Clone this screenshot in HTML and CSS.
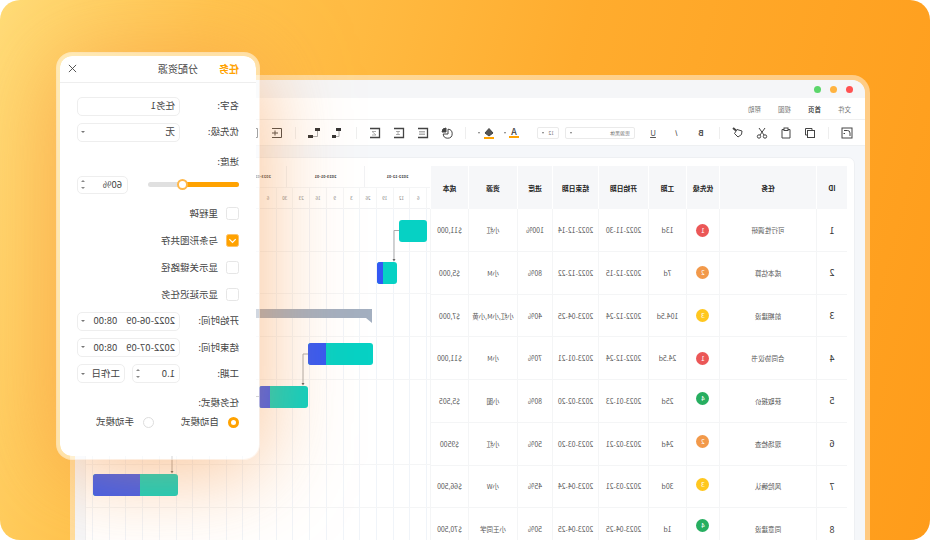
FILE: index.html
```html
<!DOCTYPE html>
<html lang="zh">
  <head>
    <meta charset="UTF-8" />
    <title>甘特图任务</title>
    <link rel="stylesheet" href="styles.css">
  </head>
  <body>
    <div class="stage">
      <div class="window">
        <div class="titlebar">
          <span class="dot red"></span>
          <span class="dot yellow"></span>
          <span class="dot green"></span>
        </div>
        <div class="menu">
          <span>文件</span>
          <span class="active">首页</span>
          <span>视图</span>
          <span>帮助</span>
        </div>
        <div class="toolbar">
          <svg class="ico" viewBox="0 0 12 12"><rect x="1" y="1" width="10" height="10"/><path d="M3 9V6a2.500 2.500 0 0 1 2.500-2.500H9M8 6.500h1.500"/></svg>
          <span class="sep"></span>
          <svg class="ico" viewBox="0 0 12 12"><path d="M4 3V1.500h6.500V8H9"/><rect x="1.500" y="3.500" width="7" height="7"/></svg>
          <svg class="ico" viewBox="0 0 12 12"><path d="M4 2.500H2v8.500h8V2.500H8"/><rect x="4" y="1" width="4" height="2.500"/></svg>
          <svg class="ico" viewBox="0 0 12 12"><circle cx="3" cy="9.500" r="1.700"/><circle cx="9" cy="9.500" r="1.700"/><path d="M4 8 9 1M8 8 3 1"/></svg>
          <svg class="ico" viewBox="0 0 12 12"><path d="M2 4 7 2.500l2.500 4L6 10 2.500 7.500z"/><path d="M8 3.500l3-2.500" stroke-width="2"/></svg>
          <span class="sep"></span>
          <span class="tb-letter bold">B</span>
          <span class="tb-letter italic">I</span>
          <span class="tb-letter under">U</span>
          <div class="tb-selects">
            <div class="tb-select font-select"><span>思源黑体</span><i class="caret small"></i></div>
            <div class="tb-select size-select"><span>12</span><i class="caret small"></i></div>
          </div>
          <div class="tb-color first">
            <span class="letter-a">A</span>
            <i class="caret small"></i>
          </div>
          <div class="tb-color">
            <svg class="ico" viewBox="0 0 12 12"><path class="bucket" d="M6 1.500 10 6l-4 3-4-3z"/><path class="fill-bar" d="M1 11h10"/></svg>
            <i class="caret small"></i>
          </div>
          <span class="sep"></span>
          <svg class="ico" viewBox="0 0 12 12"><path d="M5 2.200A4.500 4.500 0 1 0 9.800 7H5z"/><path d="M7 1a4 4 0 0 1 4 4H7z" fill="#444"/></svg>
          <svg class="ico" viewBox="0 0 12 12"><path d="M11 1.500H1.500v9H11" stroke-width="1.300"/><path class="soft" d="M4 4.500h6M4 6h6M4 7.500h6"/></svg>
          <svg class="ico" viewBox="0 0 12 12"><path d="M11 1.500H1.500v9H11" stroke-width="1.300"/><path class="soft" d="M5 4.500h4M5 7.500h4M7 4v4"/></svg>
          <svg class="ico" viewBox="0 0 12 12"><path d="M11 1.500H1.500v9H11" stroke-width="1.300"/><path class="soft" d="M5 4.500h4L5 8h4"/></svg>
          <span class="sep"></span>
          <svg class="ico" viewBox="0 0 12 12"><rect class="solid" x="3" y="1" width="5" height="3"/><rect class="solid" x="8" y="8" width="4" height="3"/><path class="soft" d="M5 4v5.500h3"/></svg>
          <svg class="ico" viewBox="0 0 12 12"><rect class="solid" x="0" y="1" width="5" height="3"/><rect class="solid" x="7" y="8" width="5" height="3"/><path class="soft" d="M2.500 4v5.500H7"/></svg>
          <span class="sep"></span>
          <svg class="ico" viewBox="0 0 12 12"><path d="M11 1.500H1.500v9H11"/><path d="M5 6h6M8 3.500v5" /></svg>
          <svg class="ico" viewBox="0 0 12 12"><path d="M11 1.500H1.500v9H11"/></svg>
        </div>

        <div class="content">
          <div class="card">
            <div class="table">
              <div class="row head">
                <div>ID</div><div>任务</div><div>优先级</div><div>工期</div><div>开始日期</div><div>结束日期</div><div>进度</div><div>资源</div><div>成本</div>
              </div>
              <div class="row">
                <div class="id">1</div><div>可行性调研</div><div><span class="pri p1">1</span></div><div>13d</div><div>2022-11-30</div><div>2022-12-14</div><div>100%</div><div>小红</div><div>$11,000</div>
              </div>
              <div class="row">
                <div class="id">2</div><div>成本估算</div><div><span class="pri p2">2</span></div><div>7d</div><div>2022-12-15</div><div>2022-12-22</div><div>80%</div><div>小M</div><div>$5,000</div>
              </div>
              <div class="row">
                <div class="id">3</div><div>前期建设</div><div><span class="pri p3">3</span></div><div>104.5d</div><div>2022-12-24</div><div>2023-04-25</div><div>40%</div><div class="tight">小红,小M,小黄</div><div>$7,000</div>
              </div>
              <div class="row">
                <div class="id">4</div><div>合同协议书</div><div><span class="pri p1">1</span></div><div>24.5d</div><div>2022-12-24</div><div>2023-01-21</div><div>70%</div><div>小M</div><div>$11,000</div>
              </div>
              <div class="row">
                <div class="id">5</div><div>获取报价</div><div><span class="pri p4 up">4</span></div><div>25d</div><div>2023-01-23</div><div>2023-02-20</div><div>80%</div><div>小图</div><div>$5,505</div>
              </div>
              <div class="row">
                <div class="id">6</div><div>现场检查</div><div><span class="pri p2 up">2</span></div><div>24d</div><div>2023-02-21</div><div>2023-03-20</div><div>50%</div><div>小红</div><div>$9500</div>
              </div>
              <div class="row">
                <div class="id">7</div><div>风险确认</div><div><span class="pri p3 up">3</span></div><div>30d</div><div>2022-03-21</div><div>2023-04-24</div><div>45%</div><div>小W</div><div>$66,500</div>
              </div>
              <div class="row">
                <div class="id">8</div><div>同意建设</div><div><span class="pri p4 up2">4</span></div><div>1d</div><div>2023-04-25</div><div>2023-04-25</div><div>50%</div><div>小王同学</div><div>$70,500</div>
              </div>
            </div>

            <div class="gantt">
              <div class="gantt-head">
                <div class="months">
                  <span class="m1">2022-12-01</span>
                  <span class="m2">2023-01-01</span>
                  <span class="m3">2023-02-01</span>
                </div>
                <div class="days">
                  <span>6</span><span>12</span><span>19</span><span>26</span><span>3</span><span>9</span><span>16</span><span>23</span><span>30</span><span>6</span><span>13</span><span>20</span>
                </div>
              </div>
              <div class="gantt-body">
                <svg class="links" viewBox="0 0 345 335">
                  <path d="M31 21.500H36V50M122 145H127V174M171 187.500H258V262"/>
                  <path class="head" d="M34.500 50h3L36 52.500zM125.500 174h3l-1.500 2.500zM256.500 262h3l-1.500 2.500z"/>
                </svg>
                <div class="bar" style="left:3px;top:10.500px;width:28px"></div>
                <div class="bar" style="left:33px;top:52.500px;width:20px"><i style="width:6px"></i></div>
                <div class="summary" style="left:58px;top:99.500px;width:120px"></div>
                <div class="bar" style="left:57px;top:133.500px;width:65px"><i style="width:18px"></i></div>
                <div class="bar" style="left:122px;top:176.500px;width:49px"><i style="width:11px"></i></div>
                <div class="bar" style="left:252px;top:264.500px;width:85px"><i style="width:47px"></i></div>
              </div>
            </div>
          </div>
        </div>
      </div>

      <div class="panel">
        <div class="tabs">
          <span class="tab on">任务</span>
          <span class="tab">分配资源</span>
          <svg class="close" viewBox="0 0 10 10"><path d="M1 1l8 8M9 1l-8 8"/></svg>
        </div>
        <div class="panel-body">
          <div class="form-row">
            <label>名字:</label>
            <div class="field"><span>任务1</span></div>
          </div>
          <div class="form-row gap">
            <label>优先级:</label>
            <div class="field"><span>无</span><i class="caret"></i></div>
          </div>
          <div class="plain-label progress-label">进度:</div>
          <div class="slider-row">
            <div class="slider">
              <div class="slider-fill" style="width:62.600%"></div>
              <span class="thumb" style="left:62.600%"></span>
            </div>
            <div class="field short"><span>60%</span><i class="spin"></i></div>
          </div>

          <div class="checks">
            <div class="check-row"><span class="box"></span>里程碑</div>
            <div class="check-row">
              <span class="box on"><svg viewBox="0 0 12 12"><path d="M2.500 4.500 6 8l3.500-3.500"/></svg></span>与条形图共存
            </div>
            <div class="check-row"><span class="box"></span>显示关键路径</div>
            <div class="check-row"><span class="box"></span>显示延迟任务</div>
          </div>

          <div class="form-row times">
            <label>开始时间:</label>
            <div class="field"><span class="when">2022-06-09<b>08:00</b></span><i class="caret"></i></div>
          </div>
          <div class="form-row gap-time">
            <label>结束时间:</label>
            <div class="field"><span class="when">2022-07-09<b>08:00</b></span><i class="caret"></i></div>
          </div>
          <div class="form-row gap-time">
            <label>工期:</label>
            <div class="split">
              <div class="field duration"><span>1.0</span><i class="spin"></i></div>
              <div class="field unit"><span>工作日</span><i class="caret"></i></div>
            </div>
          </div>

          <div class="plain-label mode-label">任务模式:</div>
          <div class="radios">
            <span class="radio on"></span><span class="radio-text">自动模式</span>
            <span class="radio"></span><span>手动模式</span>
          </div>
        </div>
      </div>
    </div>
  </body>
</html>
```

FILE: styles.css
```css
* {
  box-sizing: border-box;
}
body {
  margin: 0;
  background: #fff;
  font-family: "Noto Sans CJK SC", sans-serif;
  color: #333;
}
.stage {
  position: relative;
  width: 930px;
  height: 540px;
  padding: 75px 0 0 60px;
  overflow: hidden;
  border-radius: 20px;
  background: linear-gradient(255deg, #ffdc78 0%, #ffc44f 20%, #ffac2e 55%, #ff9c1a 100%);
  /* the whole shot is flipped left to right */
  transform: scaleX(-1);
}

.window {
  width: 800px;
  height: 500px;
  border: 5px solid rgba(255, 255, 255, 0.45);
  border-radius: 18px;
  background: #f5f7fa;
  background-clip: padding-box;
  overflow: hidden;
}
.titlebar {
  display: flex;
  align-items: center;
  gap: 9px;
  height: 18px;
  padding-left: 12px;
  background: #f5f6f8;
}
.dot {
  width: 7px;
  height: 7px;
  border-radius: 50%;
}
.red { background: #ff5252; }
.yellow { background: #ffb340; }
.green { background: #5cd66b; }

.menu {
  display: flex;
  align-items: center;
  gap: 17px;
  height: 22px;
  padding-left: 14px;
  background: #fff;
  border-bottom: 1px solid #f0f0f0;
  font-size: 6.500px;
  color: #777;
}
.menu .active {
  color: #222;
  font-weight: 500;
}
.toolbar {
  display: flex;
  align-items: center;
  gap: 12px;
  height: 26px;
  padding-left: 12px;
  background: #fff;
  border-bottom: 1px solid #eef0f2;
}
.ico {
  flex: none;
  width: 12px;
  height: 12px;
  fill: none;
  stroke: #444;
  stroke-width: 1;
}
.ico .soft {
  stroke: #999;
  stroke-width: 0.800;
}
.ico .solid {
  fill: #333;
  stroke: none;
}
.ico .bucket {
  fill: #555;
}
.ico .fill-bar {
  stroke: #ffa200;
  stroke-width: 2;
}
.sep {
  flex: none;
  width: 1px;
  height: 12px;
  background: #eee;
}
.tb-letter {
  flex: none;
  width: 12px;
  font-size: 8px;
  line-height: 12px;
  text-align: center;
  color: #555;
}
.bold { font-weight: 700; }
.italic { font-style: italic; }
.under { text-decoration: underline; }
.tb-selects {
  display: flex;
  gap: 6px;
}
.tb-select {
  display: flex;
  align-items: center;
  justify-content: space-between;
  height: 12px;
  padding: 0 4px;
  border: 1px solid #eaeaea;
  border-radius: 2px;
  font-size: 5px;
  color: #777;
}
.font-select { width: 70px; }
.size-select { width: 22px; }
.tb-color {
  display: flex;
  align-items: center;
  gap: 3px;
  margin-left: -3px;
}
.tb-color.first { margin-left: 6px; }
.letter-a {
  width: 10px;
  font-size: 9px;
  font-weight: 500;
  line-height: 9px;
  text-align: center;
  color: #444;
  border-bottom: 2px solid #ffa200;
}

.caret {
  flex: none;
  width: 0;
  height: 0;
  border-left: 2px solid transparent;
  border-right: 2px solid transparent;
  border-top: 2.500px solid #777;
}
.caret.small {
  border-left-width: 1.500px;
  border-right-width: 1.500px;
  border-top-width: 2px;
}

.content {
  padding: 10.700px 10px 0;
}
.card {
  display: flex;
  height: 400px;
  padding: 8px 0 0 7px;
  background: #fff;
  border: 1px solid #eef0f3;
  border-radius: 7px;
}
.table {
  flex: none;
  width: 417px;
}
.row {
  display: grid;
  grid-template-columns: 31px 97px 33px 38px 50px 46px 35px 49px 38px;
  height: 42.700px;
  border-bottom: 1px solid #f4f5f6;
  font-size: 6.600px;
  color: #555;
}
.row > div {
  display: flex;
  align-items: center;
  justify-content: center;
  border-right: 1px solid #f4f5f6;
  white-space: nowrap;
}
.row > div:nth-child(n+4) {
  font-size: 6.900px;
}
.row > div:nth-child(8) {
  font-size: 6.500px;
}
.row .id {
  font-size: 9px;
  color: #333;
}
.row > .tight {
  font-size: 6px;
}
.row.head {
  height: 43.700px;
  background: #f6f7f9;
  border-bottom: 0;
  font-weight: 700;
  color: #222;
}
.row.head > div {
  font-size: 6.800px;
  border-right-color: #fff;
}
.pri {
  width: 13px;
  height: 13px;
  border-radius: 50%;
  font-size: 6.500px;
  line-height: 13px;
  text-align: center;
  color: #fff;
}
.p1 { background: #eb5757; }
.p2 { background: #f2994a; }
.p3 { background: #ffc71f; }
.p4 { background: #27ae60; }
.up { margin-bottom: 4px; }
.up2 { margin-bottom: 8px; }

.gantt {
  flex: 1;
  min-width: 0;
}
.gantt-head {
  height: 43.700px;
  background: #fff;
  border-bottom: 1px solid #f1f2f4;
}
.months {
  display: flex;
  height: 22px;
  border-bottom: 1px solid #f4f5f6;
  font-size: 4px;
  font-weight: 700;
  line-height: 21px;
  text-align: center;
  color: #444;
}
.m1 { width: 66px; border-right: 1px solid #f1f2f4; }
.m2 { width: 78px; border-right: 1px solid #f1f2f4; }
.m3 { width: 52px; }
.days {
  display: flex;
  padding-left: 3px;
  font-size: 4.500px;
  line-height: 21px;
  text-align: center;
  color: #777;
}
.days span {
  width: 16.700px;
  border-left: 1px solid #f4f5f6;
}
.gantt-body {
  position: relative;
  height: 335px;
  background-image:
    repeating-linear-gradient(to bottom, transparent 0 41.700px, #f4f5f6 41.700px 42.700px),
    repeating-linear-gradient(to right, #f0f4f9 0 1px, transparent 1px 16.700px);
  background-position: 0 0, 3px 0;
}
.links {
  position: absolute;
  top: 0;
  left: 0;
  width: 345px;
  height: 335px;
  fill: none;
  stroke: #aaa;
  stroke-width: 1;
}
.links .head {
  fill: #666;
  stroke: none;
}
.bar {
  position: absolute;
  display: flex;
  justify-content: flex-end;
  height: 22px;
  overflow: hidden;
  border-radius: 3px;
  background: #06d1c4;
}
.bar i {
  height: 100%;
  background: #3358f4;
}
.summary {
  position: absolute;
  height: 9px;
  background: #a3afc0;
}
.summary::after {
  content: "";
  position: absolute;
  left: 0;
  top: 9px;
  border-top: 5px solid #a3afc0;
  border-right: 6px solid transparent;
}

/* task panel */
.panel {
  position: absolute;
  top: 52px;
  left: 670px;
  width: 204px;
  height: 408px;
  border: 4px solid rgba(255, 255, 255, 0.5);
  border-radius: 16px;
  background: #fff;
  background-clip: padding-box;
  box-shadow: 0 10px 90px rgba(245, 150, 70, 0.6);
  font-size: 9.500px;
  color: #444;
}
.tabs {
  display: flex;
  align-items: center;
  height: 26.500px;
  padding: 0 8px 0 17px;
  border-bottom: 1px solid #eee;
  font-size: 10px;
  line-height: 1;
}
.tab.on {
  color: #ffa200;
  font-weight: 700;
  margin-right: 21px;
}
.close {
  width: 9px;
  height: 9px;
  margin-left: auto;
  fill: none;
  stroke: #444;
  stroke-width: 1;
}
.panel-body {
  padding: 14px 17px 0;
  line-height: 1;
}
.form-row {
  display: flex;
  align-items: center;
}
.form-row label {
  flex: none;
  width: 59px;
}
.form-row.gap { margin-top: 7px; }
.form-row.times { margin-top: 10.500px; }
.form-row.gap-time { margin-top: 7.300px; }
.field {
  display: flex;
  align-items: center;
  justify-content: space-between;
  flex: none;
  width: 103px;
  height: 19px;
  padding: 0 3px 0 4px;
  border: 1px solid #eee;
  border-radius: 5px;
}
.field.short {
  width: 51px;
  height: 18px;
  padding-left: 5px;
}
.when b {
  margin-left: 9px;
  font-weight: 400;
}
.split {
  display: flex;
  gap: 7px;
}
.field.duration { width: 48px; }
.field.unit { width: 48px; }
.spin {
  position: relative;
  flex: none;
  width: 4px;
  height: 9px;
}
.spin::before,
.spin::after {
  content: "";
  position: absolute;
  left: 0;
  border-left: 2px solid transparent;
  border-right: 2px solid transparent;
}
.spin::before {
  top: 0;
  border-bottom: 2.500px solid #888;
}
.spin::after {
  bottom: 0;
  border-top: 2.500px solid #888;
}
.plain-label {
  height: 10px;
}
.progress-label { margin-top: 15px; }
.mode-label { margin-top: 15px; }
.slider-row {
  display: flex;
  align-items: center;
  justify-content: space-between;
  margin-top: 9px;
}
.slider {
  position: relative;
  width: 91px;
  height: 5px;
  border-radius: 3px;
  background: #e0e0e0;
}
.slider-fill {
  height: 100%;
  border-radius: 3px;
  background: #ffa200;
}
.thumb {
  position: absolute;
  top: -3px;
  width: 11px;
  height: 11px;
  margin-left: -5.500px;
  border: 2px solid #ffb84a;
  border-radius: 50%;
  background: #fff;
}
.checks {
  display: flex;
  flex-direction: column;
  gap: 14px;
  margin-top: 13.500px;
}
.check-row {
  display: flex;
  align-items: center;
  gap: 8px;
  height: 13px;
}
.box {
  width: 13px;
  height: 13px;
  border: 1px solid #e6e6e6;
  border-radius: 2.500px;
}
.box.on {
  border-color: #ffc266;
  background: #ffa200;
}
.box svg {
  display: block;
  width: 11px;
  height: 11px;
  fill: none;
  stroke: #fff;
  stroke-width: 1.400;
}
.radios {
  display: flex;
  align-items: center;
  height: 11px;
  margin-top: 8.500px;
}
.radio {
  width: 11px;
  height: 11px;
  margin-right: 9px;
  border: 1px solid #ddd;
  border-radius: 50%;
}
.radio.on {
  border: 3px solid #ffa200;
}
.radio-text {
  margin-right: 27px;
}
```
